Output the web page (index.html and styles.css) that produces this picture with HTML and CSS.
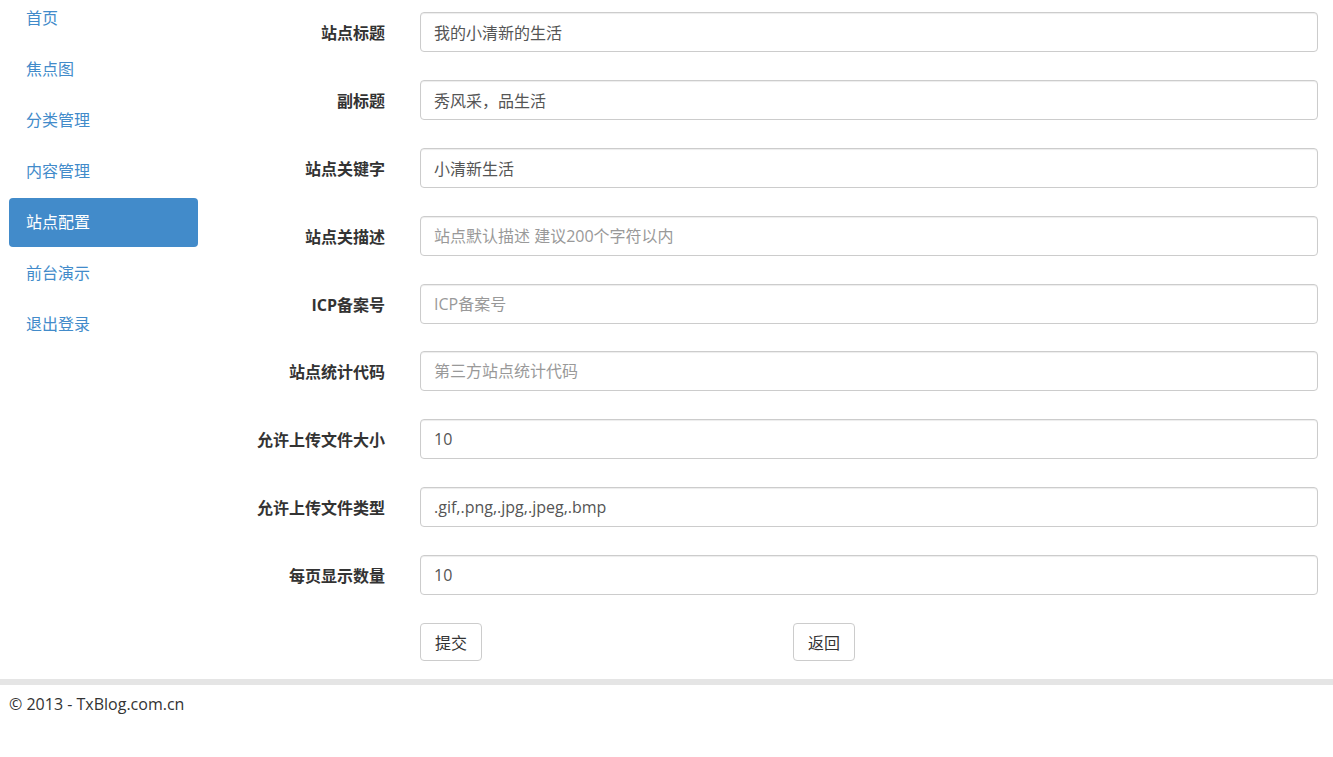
FILE: index.html
```html
<!DOCTYPE html>
<html>
<head>
  <meta charset="UTF-8">
  <title>站点配置</title>
  <link rel="stylesheet" href="styles.css">
</head>
<body>
  <div class="page">
    <ul class="side-nav">
      <li><a href="#">首页</a></li>
      <li><a href="#">焦点图</a></li>
      <li><a href="#">分类管理</a></li>
      <li><a href="#">内容管理</a></li>
      <li class="active"><a href="#">站点配置</a></li>
      <li><a href="#">前台演示</a></li>
      <li><a href="#">退出登录</a></li>
    </ul>

    <form class="config-form">
      <label class="control-label">站点标题</label>
      <input class="form-control" type="text" value="我的小清新的生活">

      <label class="control-label">副标题</label>
      <input class="form-control" type="text" value="秀风采，品生活">

      <label class="control-label">站点关键字</label>
      <input class="form-control" type="text" value="小清新生活">

      <label class="control-label">站点关描述</label>
      <input class="form-control" type="text" placeholder="站点默认描述 建议200个字符以内">

      <label class="control-label">ICP备案号</label>
      <input class="form-control" type="text" placeholder="ICP备案号">

      <label class="control-label">站点统计代码</label>
      <input class="form-control" type="text" placeholder="第三方站点统计代码">

      <label class="control-label">允许上传文件大小</label>
      <input class="form-control" type="text" value="10">

      <label class="control-label">允许上传文件类型</label>
      <input class="form-control" type="text" value=".gif,.png,.jpg,.jpeg,.bmp">

      <label class="control-label">每页显示数量</label>
      <input class="form-control" type="text" value="10">

      <div class="form-actions">
        <button type="submit" class="btn">提交</button>
        <button type="button" class="btn">返回</button>
      </div>
    </form>
  </div>

  <hr class="divider">
  <footer class="footer">&copy; 2013 - TxBlog.com.cn</footer>
</body>
</html>
```

FILE: styles.css
```css
body {
  margin: 0;
  font-family: "Open Sans", "Noto Sans CJK SC", sans-serif;
  font-size: 16px;
  color: #333;
  background: #fff;
}
.page {
  display: grid;
  grid-template-columns: 189px 1fr;
  padding: 0 15px 0 9px;
  margin-top: -6px;
}
.side-nav {
  list-style: none;
  margin: 0;
  padding: 0;
}
.side-nav li + li {
  margin-top: 2px;
}
.side-nav a {
  display: block;
  padding: 13px 17px;
  line-height: 23px;
  color: #428bca;
  text-decoration: none;
  border-radius: 4px;
}
.side-nav .active a {
  background: #428bca;
  color: #fff;
}
.config-form {
  display: grid;
  grid-template-columns: 187px 1fr;
  column-gap: 35px;
  row-gap: 27.875px;
  align-items: center;
  margin-top: 18px;
}
.control-label {
  text-align: right;
  font-weight: bold;
  line-height: 23px;
  padding-top: 3px;
}
.form-control {
  box-sizing: border-box;
  height: 40px;
  padding: 0 13px;
  font: inherit;
  color: #555;
  border: 1px solid #ccc;
  border-radius: 4px;
  box-shadow: inset 0 1px 1px rgba(0, 0, 0, .075);
  outline: none;
}
.form-control::placeholder {
  color: #999;
}
.form-actions {
  grid-column: 2;
  display: grid;
  grid-template-columns: 373px auto;
  justify-items: start;
}
.btn {
  height: 38px;
  padding: 0 14px;
  font: inherit;
  color: #333;
  background: #fff;
  border: 1px solid #ccc;
  border-radius: 4px;
}
.divider {
  margin: 18px 0 0;
  border: 0;
  border-top: 6px solid #e5e5e5;
}
.footer {
  padding: 8px 9px;
  line-height: 23px;
}
```
